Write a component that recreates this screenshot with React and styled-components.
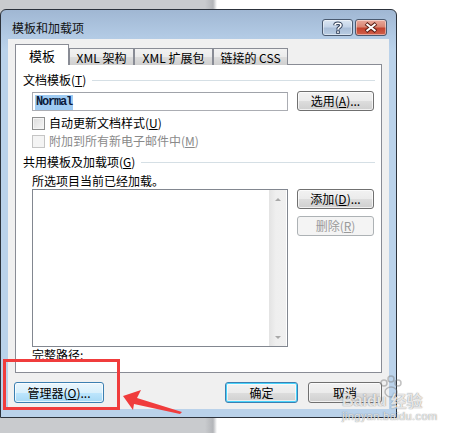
import styled, { createGlobalStyle, css } from 'styled-components';

const GlobalStyle = createGlobalStyle`
  body {
    margin: 0;
    font-family: "Noto Sans CJK SC", "Noto Sans", sans-serif;
    font-size: 12px;
  }
`;

const Page = styled.div`
  position: relative;
  width: 460px;
  height: 433px;
  box-sizing: border-box;
  padding-top: 9px;
  overflow: hidden;
  background: linear-gradient(to right, #c9cbce 0, #c9cbce 205px, #b3b5b9 213px, #fff 217px);
`;

const Window = styled.div`
  width: 397px;
  height: 409px;
  box-sizing: border-box;
  border: 1px solid #2c323b;
  border-radius: 6px 6px 0 0;
  background: linear-gradient(#a0b7d3 0, #b2cae4 26px, #bad2ea 40px, #bad2ea 100%);
  padding: 0 7px 8px;
  display: flex;
  flex-direction: column;
`;

const TitleBar = styled.div`
  height: 29px;
  display: flex;
  align-items: flex-start;
  padding-left: 4px;
`;

const Title = styled.div`
  margin-top: 11px;
  line-height: 14px;
  color: #111;
`;

const CaptionButtons = styled.div`
  margin: 9px 2px 0 auto;
  display: flex;
  gap: 2px;
`;

const CaptionButton = styled.div`
  width: ${({ w }) => w}px;
  height: 17px;
  box-sizing: border-box;
  border: 1px solid #4a5a70;
  border-radius: 3px;
  display: flex;
  align-items: center;
  justify-content: center;
  box-shadow: inset 0 0 0 1px rgba(255, 255, 255, 0.45);
  background: ${({ red }) =>
    red
      ? 'linear-gradient(#e9a99c 0, #d98674 45%, #c3432f 55%, #d0604b 100%)'
      : 'linear-gradient(#dbe6f2 0, #c4d4e8 45%, #a9bed8 55%, #b9cde3 100%)'};
`;

const Client = styled.div`
  flex: 1;
  background: #f0f0f0;
  padding: 6px 7px 5px;
  display: flex;
  flex-direction: column;
`;

const Tabs = styled.div`
  display: flex;
  align-items: flex-end;
  height: 20px;
  margin-bottom: -1px;
  position: relative;
  z-index: 1;
`;

const Tab = styled.div`
  width: ${({ w }) => w}px;
  box-sizing: border-box;
  border: 1px solid #898c95;
  border-bottom: none;
  display: flex;
  justify-content: center;
  line-height: 14px;
  ${({ active }) =>
    active
      ? css`
          height: 21px;
          background: #fff;
          padding-top: 4px;
          font-size: 13px;
        `
      : css`
          height: 17px;
          padding-top: 2px;
          background: linear-gradient(#f2f2f2 0, #ebebeb 50%, #dddddd 51%, #cfcfcf 100%);
        `}
`;

const Panel = styled.div`
  height: 309px;
  box-sizing: border-box;
  border: 1px solid #898c95;
  background: #fff;
  padding: 0 7px;
  display: flex;
  flex-direction: column;
`;

const GroupHeader = styled.div`
  margin-top: ${({ mt }) => mt}px;
  height: 14px;
  line-height: 14px;
  display: flex;
  align-items: center;
  white-space: nowrap;
  &::after {
    content: '';
    flex: 1;
    height: 1px;
    background: #d5dfe5;
    margin: 0 -1px 0 6px;
  }
`;

const Indent = styled.div`
  padding-left: 9px;
  display: flex;
  flex-direction: column;
`;

const Row = styled.div`
  display: flex;
  align-items: ${({ top }) => (top ? 'flex-start' : 'center')};
  margin-top: ${({ mt }) => mt}px;
`;

const TextBox = styled.div`
  width: 256px;
  height: 19px;
  box-sizing: border-box;
  border: 1px solid #abadb3;
  border-top-color: #a0a3aa;
  margin-top: 1px;
  padding: 1px 0 0 2px;
  display: flex;
  align-items: center;
`;

const Selected = styled.span`
  background: #9fcbf2;
  color: #0b1a3a;
  font-family: "Liberation Mono", monospace;
  font-weight: bold;
  font-size: 12px;
  letter-spacing: -1.2px;
  line-height: 15px;
  padding: 0 1px;
`;

const Button = styled.div`
  width: ${({ w }) => w}px;
  height: ${({ h }) => h || 20}px;
  box-sizing: border-box;
  border: 1px solid #707070;
  border-radius: 3px;
  display: flex;
  align-items: center;
  justify-content: center;
  line-height: 14px;
  white-space: nowrap;
  box-shadow: inset 0 0 0 1px rgba(255, 255, 255, 0.7);
  background: linear-gradient(#f2f2f2 0, #ebebeb 50%, #dddddd 51%, #cfcfcf 100%);
  margin-left: ${({ ml }) => (ml === 'auto' ? 'auto' : `${ml || 0}px`)};
  ${({ disabled }) =>
    disabled &&
    css`
      border-color: #adb2b5;
      background: #f4f4f4;
      color: #9a9a9a;
      box-shadow: none;
    `}
  ${({ hot }) =>
    hot &&
    css`
      border-color: #3c7fb1;
      background: linear-gradient(#eaf6fd 0, #d9f0fc 50%, #bee6fd 51%, #a7d9f5 100%);
    `}
  ${({ primary }) =>
    primary &&
    css`
      border-color: #3c7fb1;
      box-shadow: inset 0 0 0 1px #48d3fb, inset 0 0 0 2px rgba(255, 255, 255, 0.6);
    `}
`;

const Check = styled.div`
  width: 13px;
  height: 13px;
  box-sizing: border-box;
  border: 1px solid ${({ disabled }) => (disabled ? '#c5c5c5' : '#8e8f8f')};
  background: ${({ disabled }) =>
    disabled ? '#f4f4f4' : 'linear-gradient(135deg, #dcdcdc 0, #f6f6f6 100%)'};
  box-shadow: inset 0 0 0 1px #f4f4f4;
  margin-right: 4px;
`;

const Label = styled.div`
  line-height: 14px;
  height: 14px;
  color: ${({ disabled }) => (disabled ? '#8a8a8a' : '#000')};
  white-space: nowrap;
`;

const ListBox = styled.div`
  width: 256px;
  height: 158px;
  box-sizing: border-box;
  border: 1px solid #828790;
  background: #fff;
  display: flex;
  justify-content: flex-end;
`;

const ScrollBar = styled.div`
  width: 17px;
  margin-right: 1px;
  background: linear-gradient(to right, #e3e3e3 0, #efefef 40%, #f0f0f0 100%);
  display: flex;
  flex-direction: column;
  justify-content: space-between;
  align-items: center;
  padding: 8px 0 7px;
`;

const Arrow = styled.div`
  width: 0;
  height: 0;
  border-left: 3px solid transparent;
  border-right: 3px solid transparent;
  ${({ down }) =>
    down ? 'border-top: 3px solid #a8a8a8;' : 'border-bottom: 3px solid #a8a8a8;'}
`;

const SideButtons = styled.div`
  margin-left: auto;
  display: flex;
  flex-direction: column;
  gap: 7px;
`;

const Footer = styled.div`
  margin-top: 9px;
  display: flex;
  gap: 10px;
  margin-left: -1px;
`;

const Mark = styled.span`
  text-decoration: underline;
  text-underline-offset: 1px;
`;

const RedBox = styled.div`
  position: absolute;
  left: 3px;
  top: 359px;
  width: 117px;
  height: 51px;
  box-sizing: border-box;
  border: 3px solid #f03c3c;
`;

const Overlay = styled.svg`
  position: absolute;
  left: 0;
  top: 0;
  pointer-events: none;
`;

const Watermark = styled.div`
  position: absolute;
  left: 342px;
  top: 390px;
  color: rgba(255, 255, 255, 0.8);
  text-shadow: 0 0 1px rgba(90, 90, 90, 0.5), 0 0 1px rgba(90, 90, 90, 0.5);
  font-family: "Liberation Sans", sans-serif;
  pointer-events: none;
`;

const WmTop = styled.div`
  display: flex;
  align-items: flex-end;
  height: 20px;
`;

const WmBrand = styled.span`
  font-size: 16px;
  font-weight: bold;
  line-height: 18px;
`;

const WmWord = styled.span`
  margin-left: 4px;
  font-family: "Noto Sans CJK SC", sans-serif;
  font-size: 16px;
  font-weight: bold;
  line-height: 20px;
`;

const WmUrl = styled.div`
  font-size: 11px;
  line-height: 13px;
  letter-spacing: 0.4px;
`;

export default function App() {
  return (
    <Page>
      <GlobalStyle />
      <Window>
        <TitleBar>
          <Title>模板和加载项</Title>
          <CaptionButtons>
            <CaptionButton w={31}>
              <svg width="12" height="13" viewBox="0 0 12 13">
                <path
                  d="M3 4.2 C3 1.5 9 1.5 9 4.2 C9 6.4 6 6.2 6 8.5"
                  fill="none"
                  stroke="#33415a"
                  strokeWidth="3.6"
                />
                <path
                  d="M3 4.2 C3 1.5 9 1.5 9 4.2 C9 6.4 6 6.2 6 8.5"
                  fill="none"
                  stroke="#fff"
                  strokeWidth="1.6"
                />
                <rect x="4.2" y="9.4" width="3.6" height="3.4" fill="#33415a" />
                <rect x="5.1" y="10.3" width="1.8" height="1.6" fill="#fff" />
              </svg>
            </CaptionButton>
            <CaptionButton w={32} red>
              <svg width="14" height="11" viewBox="0 0 14 11">
                <path d="M2 1.5 L12 9.5 M12 1.5 L2 9.5" stroke="#5a1e15" strokeWidth="4" />
                <path d="M2.5 2 L11.5 9 M11.5 2 L2.5 9" stroke="#fff" strokeWidth="2" />
              </svg>
            </CaptionButton>
          </CaptionButtons>
        </TitleBar>
        <Client>
          <Tabs>
            <Tab w={54} active>模板</Tab>
            <Tab w={65}>XML 架构</Tab>
            <Tab w={79}>XML 扩展包</Tab>
            <Tab w={75}>链接的 CSS</Tab>
          </Tabs>
          <Panel>
            <GroupHeader mt={8}>
              文档模板(<Mark>T</Mark>)
            </GroupHeader>
            <Indent>
              <Row mt={4} top>
                <TextBox>
                  <Selected>Normal</Selected>
                </TextBox>
                <Button w={77} ml="auto">
                  选用(<Mark>A</Mark>)...
                </Button>
              </Row>
              <Row mt={5}>
                <Check />
                <Label>
                  自动更新文档样式(<Mark>U</Mark>)
                </Label>
              </Row>
              <Row mt={4}>
                <Check disabled />
                <Label disabled>
                  附加到所有新电子邮件中(<Mark>M</Mark>)
                </Label>
              </Row>
            </Indent>
            <GroupHeader mt={7}>
              共用模板及加载项(<Mark>G</Mark>)
            </GroupHeader>
            <Indent>
              <Row mt={5}>
                <Label>所选项目当前已经加载。</Label>
              </Row>
              <Row mt={1} top>
                <ListBox>
                  <ScrollBar>
                    <Arrow />
                    <Arrow down />
                  </ScrollBar>
                </ListBox>
                <SideButtons>
                  <Button w={77}>
                    添加(<Mark>D</Mark>)...
                  </Button>
                  <Button w={77} disabled>
                    删除(<Mark>R</Mark>)
                  </Button>
                </SideButtons>
              </Row>
              <Row mt={1}>
                <Label>完整路径:</Label>
              </Row>
            </Indent>
          </Panel>
          <Footer>
            <Button w={90} h={21} hot>
              管理器(<Mark>O</Mark>)...
            </Button>
            <Button w={73} h={21} ml="auto" primary>
              确定
            </Button>
            <Button w={74} h={21}>
              取消
            </Button>
          </Footer>
        </Client>
      </Window>

      <RedBox />
      <Overlay width="460" height="433">
        <polygon
          points="123,396 141,390 137,398 182,412 180,414 134,404 133,410"
          fill="#f03c3c"
        />
        <g fill="none" stroke="rgba(120,120,120,0.45)" strokeWidth="1.5">
          <circle cx="384" cy="383" r="3" />
          <circle cx="391" cy="379" r="3" />
          <circle cx="398" cy="383" r="3" />
          <ellipse cx="391" cy="392" rx="6" ry="5" />
        </g>
      </Overlay>
      <Watermark>
        <WmTop>
          <WmBrand>Baidu</WmBrand>
          <WmWord>经验</WmWord>
        </WmTop>
        <WmUrl>jingyan.baidu.com</WmUrl>
      </Watermark>
    </Page>
  );
}
